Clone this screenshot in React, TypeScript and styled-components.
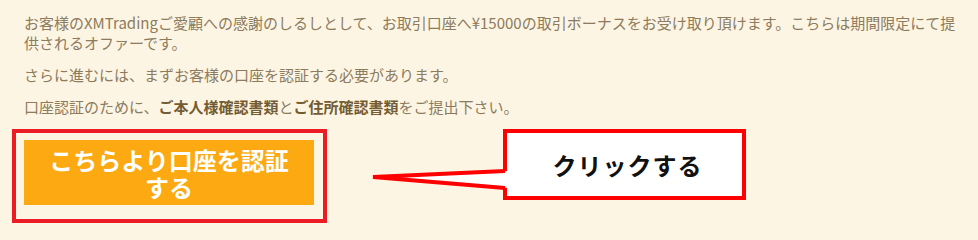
import styled, { createGlobalStyle } from 'styled-components';

const GlobalStyle = createGlobalStyle`
  html, body {
    margin: 0;
    padding: 0;
    background: #fdf5e4;
  }
  body {
    font-family: "Noto Sans CJK JP", "Noto Sans", sans-serif;
  }
`;

const Page = styled.div`
  width: 978px;
  height: 240px;
  box-sizing: border-box;
  padding: 13px 8px 0 12px;
  background: #fdf5e4;
  overflow: hidden;
`;

const Paragraph = styled.p`
  margin: 0 0 12px 12px;
  font-size: 15px;
  line-height: 20px;
  color: #8c7b5d;

  strong {
    color: #735c32;
    font-weight: 700;
  }
`;

const ActionRow = styled.div`
  display: flex;
  align-items: flex-start;
  gap: 176px;
  margin-top: 4px;
`;

const HighlightFrame = styled.div`
  border: 4px solid #ec1c24;
  padding: 7px 9px 14px 8px;
`;

const VerifyButton = styled.button`
  display: block;
  width: 290px;
  height: 65px;
  box-sizing: border-box;
  padding: 6px 20px 5px;
  border: none;
  background: #fca912;
  color: #fff;
  font-family: "Noto Sans CJK JP", sans-serif;
  font-size: 24px;
  font-weight: 700;
  line-height: 27px;
  text-align: center;
  cursor: pointer;
`;

const Callout = styled.div`
  position: relative;
  width: 243px;
  height: 71px;
  box-sizing: border-box;
  border: 4px solid #ff0000;
  background: #fff;
  display: flex;
  align-items: center;
  justify-content: center;
`;

const CalloutText = styled.span`
  font-family: "Noto Sans CJK JP", sans-serif;
  font-size: 24px;
  font-weight: 700;
  letter-spacing: 1px;
  color: #111;
  margin-left: 6px;
`;

const Tail = styled.svg`
  position: absolute;
  left: -138px;
  top: -4px;
  overflow: visible;
`;

const CalloutTail = () => (
  <Tail width="142" height="71" viewBox="0 0 142 71">
    <polygon points="4,48 140,42 140,59" fill="#fff" />
    <polyline
      points="136,42 4,48 136,59"
      fill="none"
      stroke="#ff0000"
      strokeWidth="4"
      strokeLinejoin="miter"
    />
  </Tail>
);

export default function App() {
  return (
    <Page>
      <GlobalStyle />
      <Paragraph>
        お客様のXMTradingご愛顧への感謝のしるしとして、お取引口座へ¥15000の取引ボーナスをお受け取り頂けます。こちらは期間限定にて提供されるオファーです。
      </Paragraph>
      <Paragraph>さらに進むには、まずお客様の口座を認証する必要があります。</Paragraph>
      <Paragraph>
        口座認証のために、<strong>ご本人様確認書類</strong>と<strong>ご住所確認書類</strong>をご提出下さい。
      </Paragraph>
      <ActionRow>
        <HighlightFrame>
          <VerifyButton>こちらより口座を認証する</VerifyButton>
        </HighlightFrame>
        <Callout>
          <CalloutTail />
          <CalloutText>クリックする</CalloutText>
        </Callout>
      </ActionRow>
    </Page>
  );
}
